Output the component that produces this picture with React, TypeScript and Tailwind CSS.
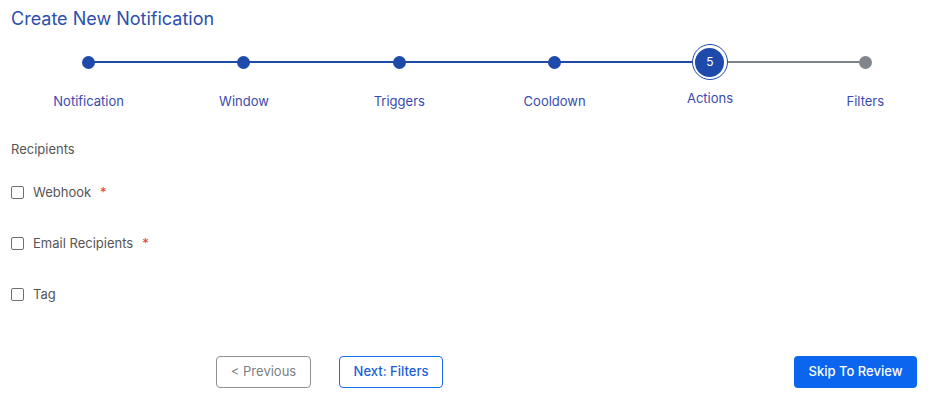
import React from "react";

const steps = ["Notification", "Window", "Triggers", "Cooldown", "Actions", "Filters"];
const active = 4;

function Checkbox() {
  return <span className="inline-block w-[13px] h-[13px] border border-[#6f6f6f] rounded-[2px] bg-white shrink-0" />;
}

export default function App() {
  return (
    <div className="w-[935px] h-[402px] overflow-hidden bg-white font-['Inter',sans-serif] pl-[11px] pr-[18px]">
      <h1 className="pt-[8px] text-[18px] leading-[22px] text-[#2c4fae] font-normal">Create New Notification</h1>

      <div className="grid grid-cols-6 w-[932px] mt-[14px]">
        {steps.map((s, i) => (
          <div key={s} className="relative flex flex-col items-center">
            {i < steps.length - 1 && (
              <div
                className={
                  "absolute top-[17px] left-1/2 w-full h-[2px] " +
                  (i < active ? "bg-[#1e4aac]" : "bg-[#7d8489]")
                }
              />
            )}
            <div className="relative z-10 h-[36px] flex items-center justify-center">
              {i === active ? (
                <div className="w-[36px] h-[36px] rounded-full border-[1.5px] border-[#1e4aac] bg-white flex items-center justify-center">
                  <div className="w-[29px] h-[29px] rounded-full bg-[#1e4aac] text-white text-[12px] leading-none flex items-center justify-center">
                    5
                  </div>
                </div>
              ) : (
                <div
                  className={
                    "w-[13px] h-[13px] rounded-full " + (i < active ? "bg-[#1e4aac]" : "bg-[#80868b]")
                  }
                />
              )}
            </div>
            <div
              className={
                "text-[13px] leading-[18px] text-[#3a4bb0] " + (i === active ? "mt-[9px]" : "mt-[12px]")
              }
            >
              {s}
            </div>
          </div>
        ))}
      </div>

      <div className="mt-[30px] text-[13px] leading-[18px] text-[#555555]">Recipients</div>

      <div className="flex flex-col gap-[33px] mt-[25px]">
        {[
          ["Webhook", true],
          ["Email Recipients", true],
          ["Tag", false],
        ].map(([label, req]) => (
          <div key={label as string} className="flex items-center h-[18px]">
            <Checkbox />
            <span className="ml-[9px] text-[13px] leading-[18px] text-[#555555]">{label as string}</span>
            {req && <span className="ml-[9px] text-[13px] text-[#e53935] leading-none">*</span>}
          </div>
        ))}
      </div>

      <div className="flex items-center mt-[53px]">
        <button className="ml-[205px] w-[95px] h-[32px] border border-[#8b9095] rounded-[4px] text-[13px] text-[#7a7f85] bg-white">
          &lt; Previous
        </button>
        <button className="ml-[28px] w-[104px] h-[32px] border border-[#1a6cf0] rounded-[4px] text-[13px] text-[#1a5fe0] bg-white font-medium">
          Next: Filters
        </button>
        <button className="ml-auto w-[123px] h-[32px] rounded-[4px] text-[13px] text-white bg-[#0b65ee] font-medium">
          Skip To Review
        </button>
      </div>
    </div>
  );
}
